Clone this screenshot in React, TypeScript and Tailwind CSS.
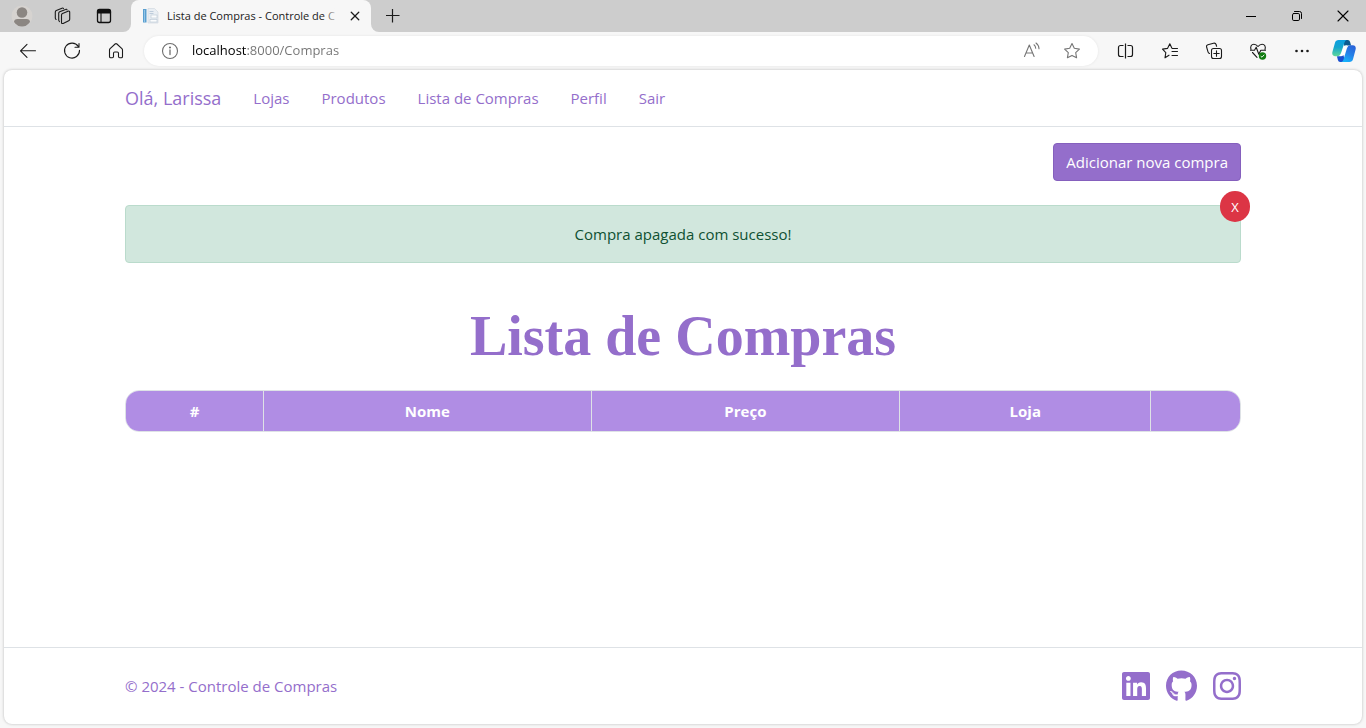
import React, { useState } from "react";
import { FaGithub, FaInstagram, FaLinkedin } from "react-icons/fa";

type IconProps = { className?: string; children: React.ReactNode };

function Icon({ className = "size-5", children }: IconProps) {
  return (
    <svg
      viewBox="0 0 20 20"
      className={className}
      fill="none"
      stroke="currentColor"
      strokeWidth="1.1"
      strokeLinecap="round"
      strokeLinejoin="round"
      aria-hidden="true"
    >
      {children}
    </svg>
  );
}

const STAR =
  "M10 2.6 L12.3 7.3 L17.4 8.1 L13.7 11.7 L14.6 16.8 L10 14.4 L5.4 16.8 L6.3 11.7 L2.6 8.1 L7.7 7.3 Z";

function ToolButton({ label, children }: { label: string; children: React.ReactNode }) {
  return (
    <button type="button" aria-label={label} className="flex h-8 w-11 shrink-0 items-center justify-center text-[#1b1b1b]">
      {children}
    </button>
  );
}

function CopilotLogo() {
  return (
    <svg viewBox="0 0 24 24" className="size-6" aria-hidden="true">
      <defs>
        <linearGradient id="cpA" x1="0" y1="0" x2="0" y2="1">
          <stop offset="0" stopColor="#0c9fe0" />
          <stop offset="0.45" stopColor="#14a5cf" />
          <stop offset="1" stopColor="#5fd79a" />
        </linearGradient>
        <linearGradient id="cpB" x1="0.8" y1="0" x2="0.3" y2="1">
          <stop offset="0" stopColor="#2a62d8" />
          <stop offset="0.5" stopColor="#2480e8" />
          <stop offset="1" stopColor="#17b4fb" />
        </linearGradient>
      </defs>
      <path d="M11 1h4.800c1.300 0 1.900.8 2.300 2l1 3.400h-3.300c-1.400 0-2.300.3-3.300 1.200Z" fill="#0b5a8f" />
      <path d="M13 23H8.200c-1.300 0-1.900-.8-2.300-2l-1-3.800h3.300c1.400 0 2.300-.3 3.300-1.200Z" fill="#1a4fd0" />
      <path d="M9.600 17c1-.6 1.500-1.500 1.900-2.800l1.500-5c.5-1.600 1.200-2.500 2.600-3l-1.200.1c-2.200.2-3.200 1.300-3.800 3.200l-1.500 4.700c-.4 1.400-.9 2.200-2.100 2.700Z" fill="#fff" />
      <path d="m9.300 13.700 2.500-6h3l-2.600 8.600H9Z" fill="#fff" />
      <path
        d="M6.600 1h8c-1.200.5-1.800 1.500-2.200 2.800L9.200 13.600c-.8 2.500-1.900 3.600-3.900 3.600H3.300C.8 17.200-.2 15.300.4 13L3 3.800C3.500 2 4.700 1 6.600 1Z"
        fill="url(#cpA)"
      />
      <path
        d="M17.400 23h-8c1.200-.5 1.800-1.500 2.200-2.800L14.800 9.800c.8-2.500 1.900-3.500 3.900-3.500h2c2.500 0 3.500 2 2.900 4.200L21 20.200c-.5 1.800-1.700 2.800-3.600 2.800Z"
        fill="url(#cpB)"
      />
    </svg>
  );
}

function TabStrip() {
  return (
    <div className="flex h-8 items-stretch bg-[#cdcdcd]">
      <button type="button" aria-label="Perfil do navegador" className="flex w-11 items-center justify-center">
        <svg viewBox="0 0 22 22" className="size-[22px]" aria-hidden="true">
          <circle cx="11" cy="11" r="10.500" fill="#d6d3d0" />
          <circle cx="11" cy="7.500" r="5.300" fill="#8b8682" />
          <path d="M3 17c0-2 1.400-3 3.500-3h9c2.100 0 3.500 1 3.500 3a9.500 9.500 0 0 1-16 0Z" fill="#8b8682" />
        </svg>
      </button>
      <button type="button" aria-label="Workspaces" className="flex w-9 items-center justify-center text-[#1b1b1b]">
        <Icon>
          <path d="M9.500 9c0-.7.400-1.200 1-1.500l5.500-2.300c1-.4 1.700.1 1.700 1v7c0 .7-.4 1.200-1 1.500l-5.500 2.700c-1 .4-1.700 0-1.700-1Z" />
          <path d="M15 3.900c-.2-.6-.8-.8-1.500-.5L7.700 5.700c-.7.300-1 .8-1 1.500v6.900c0 .7.200 1.100.8 1.500" />
          <path d="M11.500 2.500c-.3-.5-.8-.6-1.500-.3L4.300 4.500c-.7.300-1 .8-1 1.500v6c0 .7.200 1.100.8 1.500" />
        </Icon>
      </button>
      <button type="button" aria-label="Menu de ações da guia" className="flex w-12 items-center justify-center text-[#111]">
        <Icon>
          <rect x="3.500" y="3.500" width="13" height="13" rx="2" strokeWidth="1.300" />
          <path d="M3.500 7V5.500a2 2 0 0 1 2-2h9a2 2 0 0 1 2 2V7Z" fill="currentColor" />
          <path d="M7 7v9.500" />
        </Icon>
      </button>
      <div className="relative ml-[3px] flex w-60 items-center gap-2 rounded-t-lg bg-[#f7f7f7] px-3 pr-2">
        <span className="absolute bottom-0 right-full size-2 bg-[#f7f7f7]">
          <span className="block size-2 rounded-br-lg bg-[#cdcdcd]" />
        </span>
        <span className="absolute bottom-0 left-full size-2 bg-[#f7f7f7]">
          <span className="block size-2 rounded-bl-lg bg-[#cdcdcd]" />
        </span>
        <svg viewBox="0 0 16 16" className="size-4 shrink-0" aria-hidden="true">
          <rect x="0" y="1" width="3.500" height="13.500" fill="#5a9fd0" />
          <rect x="1" y="2" width="1" height="12" fill="#94c5e6" />
          <path d="M5 .5h6.500L15 4v11H5Z" fill="#e9eef3" stroke="#cdd5de" strokeWidth=".6" />
          <path d="M6.500 3.500h4M6.500 5.500h4" stroke="#b3c3d4" strokeWidth=".8" />
          <rect x="8" y="7" width="6" height="3" fill="#fbfcfd" stroke="#b9c6d4" strokeWidth=".6" />
          <rect x="7" y="11.500" width="7" height="2.500" fill="#fbfcfd" stroke="#b9c6d4" strokeWidth=".6" />
        </svg>
        <span className="relative flex-1 whitespace-nowrap text-[11px] text-[#1b1b1b]">
          Lista de Compras - Controle de C
          <span className="absolute inset-y-0 right-0 w-4 bg-linear-to-r from-transparent to-[#f7f7f7]" />
        </span>
        <button type="button" aria-label="Fechar guia" className="flex size-4 shrink-0 items-center justify-center text-[#1b1b1b]">
          <Icon className="size-4">
            <path d="m5.300 5.300 9.400 9.400M14.700 5.300l-9.400 9.400" strokeWidth="1.600" />
          </Icon>
        </button>
      </div>
      <button type="button" aria-label="Nova guia" className="flex w-11 items-center justify-center text-[#1b1b1b]">
        <Icon>
          <path d="M9.500 3v13.500M3 9.500h13.500" strokeLinecap="butt" strokeWidth="1.200" />
        </Icon>
      </button>
      <div className="flex-1" />
      <button type="button" aria-label="Minimizar" className="flex w-[46px] items-center justify-center text-black">
        <Icon>
          <path d="M5 10.500h10" strokeLinecap="butt" strokeWidth="1" />
        </Icon>
      </button>
      <button type="button" aria-label="Restaurar" className="flex w-[46px] items-center justify-center text-black">
        <Icon>
          <rect x="5.500" y="7.500" width="7" height="7" rx="1.300" strokeWidth="1" />
          <path d="M7.500 5.500h5a2 2 0 0 1 2 2v5" strokeWidth="1" />
        </Icon>
      </button>
      <button type="button" aria-label="Fechar" className="flex w-[46px] items-center justify-center text-black">
        <Icon>
          <path d="m5 5 10 10M15 5 5 15" />
        </Icon>
      </button>
    </div>
  );
}

function Toolbar() {
  return (
    <div className="flex h-[38px] items-center bg-[#f7f7f7] pl-1.5 pr-0.5">
      <ToolButton label="Voltar">
        <Icon>
          <path d="M17.500 9.800H2.500M9 3.300 2.500 9.800l6.500 6.500" />
        </Icon>
      </ToolButton>
      <ToolButton label="Atualizar">
        <Icon>
          <path d="M16.300 5.500A7.500 7.500 0 1 0 17.500 9.300M17 2.500v3.800h-4" />
        </Icon>
      </ToolButton>
      <ToolButton label="Página inicial">
        <Icon>
          <path d="M3.500 9c0-.6.200-1 .6-1.400l5-4.600c.6-.5 1.200-.5 1.800 0l5 4.600c.4.400.6.800.6 1.400v6.500c0 .8-.5 1.300-1.200 1.300h-1.600c-.8 0-1.200-.4-1.200-1.200v-3.400c0-.8-.5-1.200-1.200-1.200H8.700c-.8 0-1.200.4-1.200 1.200v3.400c0 .8-.4 1.200-1.200 1.200H4.700c-.7 0-1.200-.5-1.200-1.300Z" />
        </Icon>
      </ToolButton>
      <div className="mx-1.5 flex h-[30px] flex-1 items-center rounded-full bg-white px-4 shadow-[0_0_3px_rgba(0,0,0,0.08)]">
        <button type="button" aria-label="Informações do site" className="text-[#6e6e6e]">
          <Icon>
            <circle cx="10" cy="10" r="7.500" />
            <path d="M10 9v4.500" strokeWidth="1.300" />
            <circle cx="10" cy="6.500" r=".5" fill="currentColor" />
          </Icon>
        </button>
        <input
          type="text"
          aria-label="Endereço"
          defaultValue="localhost:8000/Compras"
          className="ml-3 min-w-0 flex-1 bg-linear-to-r from-black from-[54px] to-[#737373] to-[54px] bg-clip-text text-[13px] text-transparent outline-none"
        />
        <button type="button" aria-label="Ler em voz alta" className="mr-5 text-[#767676]">
          <Icon>
            <path d="M2.500 15.500 7.300 4l4.800 11.500M4 12h6.500" />
            <path d="M12 3.800c1 .8 1.600 2 1.700 3.400M14 2c1.800 1.300 2.900 3.200 3 5.700" />
          </Icon>
        </button>
        <button type="button" aria-label="Adicionar aos favoritos" className="text-[#767676]">
          <Icon>
            <path d={STAR} />
          </Icon>
        </button>
      </div>
      <ToolButton label="Tela dividida">
        <Icon>
          <path
            d="M7.500 4.500h-3a2 2 0 0 0-2 2v7a2 2 0 0 0 2 2h3M11.500 4.500h3a2 2 0 0 1 2 2v7a2 2 0 0 1-2 2h-3M9.500 2.500v15"
            strokeLinecap="butt"
            strokeWidth="1.200"
          />
        </Icon>
      </ToolButton>
      <ToolButton label="Favoritos">
        <Icon>
          <path d="M9 14.200 5 16.800l.8-5.200-3.300-3.500 5-.7 2.300-4.600 2 4.300M12.500 7.500H17.500M12 10.500h5.500M12 14.500h5.500" />
        </Icon>
      </ToolButton>
      <ToolButton label="Coleções">
        <Icon>
          <rect x="7.500" y="7.500" width="10" height="10" rx="2" />
          <path d="M12.500 9.800v5.400M9.800 12.500h5.400" />
          <path d="M5.500 12.500c-.8-.2-1.300-.7-1.500-1.600L2.600 6c-.3-1.100.2-1.900 1.300-2.200l5.600-1.600c1.200-.3 2.200.1 2.600 1.300l.5 1.800" />
        </Icon>
      </ToolButton>
      <ToolButton label="Desempenho do navegador">
        <Icon>
          <path d="M3 8.500C2 5.500 3.400 3.200 5.900 3.200c1.800 0 3 .9 4.100 2.300 1.100-1.400 2.300-2.300 4.100-2.300 2.500 0 3.900 2.300 2.900 5.300M4.500 11.500 9 16.300" />
          <path d="M2.500 9.200h4l1.700-3 2.600 7 2-4h4.700" />
          <circle cx="14.500" cy="15" r="3.700" fill="#107c10" stroke="none" />
          <path d="m13 15.400 1 .8 2-2.200" stroke="#fff" strokeWidth=".9" />
        </Icon>
      </ToolButton>
      <ToolButton label="Configurações e mais">
        <Icon>
          <g fill="currentColor" stroke="none">
            <circle cx="4.500" cy="10" r="1.300" />
            <circle cx="10" cy="10" r="1.300" />
            <circle cx="15.500" cy="10" r="1.300" />
          </g>
        </Icon>
      </ToolButton>
      <button type="button" aria-label="Copilot" className="flex h-8 w-10 items-center justify-center">
        <CopilotLogo />
      </button>
    </div>
  );
}

const links = ["Lojas", "Produtos", "Lista de Compras", "Perfil", "Sair"];

const columns = [
  { title: "#", width: "w-[12.35%]" },
  { title: "Nome", width: "w-[29.4%]" },
  { title: "Preço", width: "w-[27.7%]" },
  { title: "Loja", width: "w-[22.55%]" },
  { title: "", width: "w-[8%]" },
];

export default function App() {
  const [alertOpen, setAlertOpen] = useState(true);

  return (
    <div className="flex min-h-screen flex-col bg-[#f7f7f7] font-['Open_Sans','Noto_Sans',sans-serif]">
      <TabStrip />
      <Toolbar />
      <div className="mx-1 mb-1 flex flex-1 flex-col rounded-lg bg-white text-[15px] leading-6 text-[#946ecb] shadow-[0_0_3px_rgba(0,0,0,0.25)]">
        <header className="border-b border-[#dee2e6]">
          <nav className="mx-auto flex h-14 max-w-[1140px] items-center gap-8 px-3">
            <a href="#inicio" className="text-lg">
              Olá, Larissa
            </a>
            {links.map((link) => (
              <a key={link} href="#pagina">
                {link}
              </a>
            ))}
          </nav>
        </header>

        <main className="mx-auto flex w-full max-w-[1140px] flex-1 flex-col px-3 pt-4">
          <div className="flex justify-end">
            <button type="button" className="rounded-sm border border-[#8560bd] bg-[#946ecb] px-3 py-1.5 text-white">
              Adicionar nova compra
            </button>
          </div>

          {alertOpen && (
            <div role="alert" className="relative mt-6 rounded-sm border border-[#badbcc] bg-[#d1e7dd] p-4 text-center text-[#0f5132]">
              Compra apagada com sucesso!
              <button
                type="button"
                onClick={() => setAlertOpen(false)}
                aria-label="Fechar aviso"
                className="absolute -right-2.5 -top-[15px] flex h-[31px] w-[30px] items-center justify-center rounded-full bg-[#dc3545] text-[13px] text-white"
              >
                X
              </button>
            </div>
          )}

          <h1 className="mt-10 text-center font-['Liberation_Serif',serif] text-[56px] font-bold leading-[67px]">
            Lista de Compras
          </h1>

          <div className="mt-5 overflow-hidden rounded-[14px] border border-[#dee2e6]">
            <table className="w-full table-fixed border-collapse bg-[#b08de4] text-white">
              <thead>
                <tr>
                  {columns.map((column, index) => (
                    <th
                      key={index}
                      scope="col"
                      className={`${column.width} h-10 border-r border-[#dee2e6] px-2 text-center font-bold last:border-r-0`}
                    >
                      {column.title}
                    </th>
                  ))}
                </tr>
              </thead>
            </table>
          </div>
        </main>

        <footer className="border-t border-[#dee2e6]">
          <div className="mx-auto flex h-[76px] max-w-[1140px] items-center justify-between px-3">
            <span>© 2024 - Controle de Compras</span>
            <div className="flex items-center gap-4">
              <a href="#linkedin" aria-label="LinkedIn">
                <FaLinkedin className="h-8 w-7" />
              </a>
              <a href="#github" aria-label="GitHub">
                <FaGithub className="h-8 w-[31px]" />
              </a>
              <a href="#instagram" aria-label="Instagram">
                <FaInstagram className="h-8 w-7" />
              </a>
            </div>
          </div>
        </footer>
      </div>
    </div>
  );
}
